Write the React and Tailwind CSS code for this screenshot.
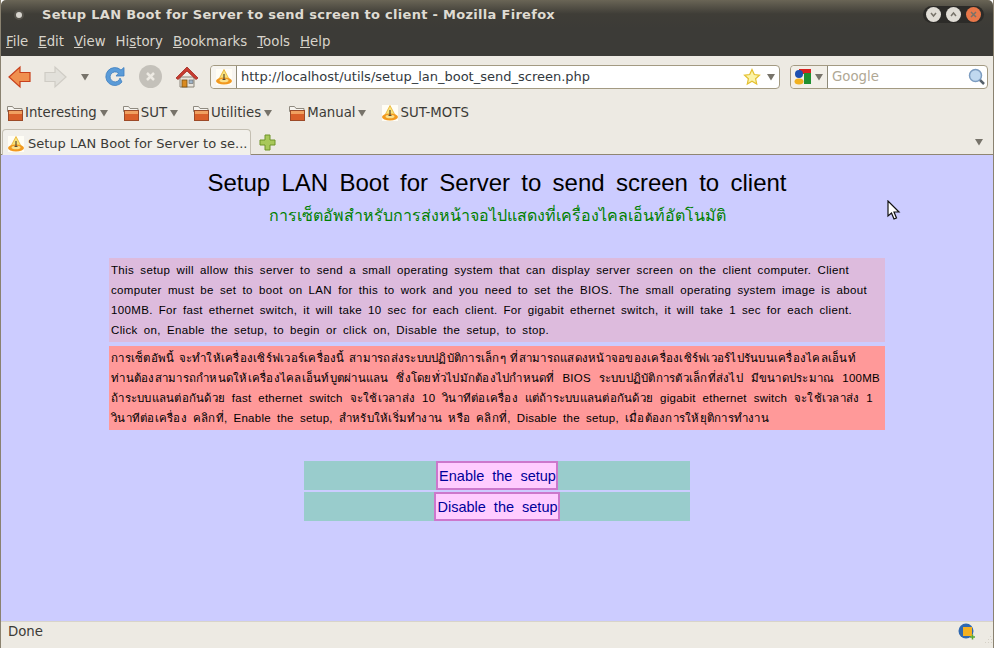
import React from "react";

const uiFont = "font-['DejaVu_Sans',sans-serif]";
const pageFont = "font-['Liberation_Sans','Noto_Sans',sans-serif]";

const Arrow = ({ className = "" }) => (
    <svg width="10" height="8" viewBox="0 0 10 8" className={className}>
        <path d="M1 1h8L5 7.500z" fill="#77736a" />
    </svg>
);

const SiteIcon = ({ size = 16 }) => (
    <svg width={size} height={size} viewBox="0 0 16 16" className="shrink-0">
        <rect width="16" height="16" fill="#fffdf5" />
        <path d="M8 0.500L13.500 11H2.500z" fill="#f8e27a" stroke="#e8b030" strokeWidth="0.800" />
        <ellipse cx="8" cy="12" rx="8" ry="3.500" fill="#f2991f" />
        <ellipse cx="8" cy="11.500" rx="4.500" ry="1.800" fill="#fbe08a" />
        <path d="M8 5v5M6.500 10.500h3" stroke="#5a4a30" strokeWidth="1.200" />
    </svg>
);

const Folder = () => (
    <svg width="16" height="16" viewBox="0 0 16 16" className="shrink-0">
        <path d="M0.500 1.500h5l1.500 2h8v3h-14.500z" fill="#f6f4ef" stroke="#8f8a80" />
        <rect x="1.500" y="5.500" width="14" height="10" fill="#d9602a" stroke="#9c4a28" />
        <rect x="2" y="6" width="13" height="3" fill="#f0a060" />
    </svg>
);

const Menu = ({ pre = "", mark, post }) => (
    <span>{pre}<u>{mark}</u>{post}</span>
);

const BookmarkFolder = ({ label, className = "" }) => (
    <div className={`flex items-center ${className}`}>
        <Folder />
        <span className="ml-[2px]">{label}</span>
        <Arrow className="ml-[2px]" />
    </div>
);

const WinButton = ({ bg, children }) => (
    <div className={`w-[15px] h-[15px] rounded-full flex items-center justify-center ${bg}`}>
        <svg width="9" height="9" viewBox="0 0 9 9" fill="none" stroke="#77736a" strokeWidth="1.500">{children}</svg>
    </div>
);

const englishLines = [
    { text: "This setup will allow this server to send a small operating system that can display server screen on the client computer. Client", width: "w-[738px]" },
    { text: "computer must be set to boot on LAN for this to work and you need to set the BIOS. The small operating system image is about", width: "w-[756px]" },
    { text: "100MB. For fast ethernet switch, it will take 10 sec for each client. For gigabit ethernet switch, it will take 1 sec for each client.", width: "w-[741px]" },
    { text: "Click on, Enable the setup, to begin or click on, Disable the setup, to stop.", width: "w-[438px]" },
];

const thaiLines = [
    { text: "การเซ็ตอัพนี้ จะทำให้เครื่องเซิร์ฟเวอร์เครื่องนี้ สามารถส่งระบบปฏิบัติการเล็กๆ ที่สามารถแสดงหน้าจอของเครื่องเซิร์ฟเวอร์ไปรันบนเครื่องไคลเอ็นท์", width: "w-[745px]" },
    { text: "ท่านต้องสามารถกำหนดให้เครื่องไคลเอ็นท์บูตผ่านแลน ซึ่งโดยทั่วไปมักต้องไปกำหนดที่ BIOS ระบบปฏิบัติการตัวเล็กที่ส่งไป มีขนาดประมาณ 100MB", width: "w-[769px]" },
    { text: "ถ้าระบบแลนต่อกันด้วย fast ethernet switch จะใช้เวลาส่ง 10 วินาทีต่อเครื่อง แต่ถ้าระบบแลนต่อกันด้วย gigabit ethernet switch จะใช้เวลาส่ง 1", width: "w-[762px]" },
    { text: "วินาทีต่อเครื่อง คลิกที่, Enable the setup, สำหรับให้เริ่มทำงาน หรือ คลิกที่, Disable the setup, เมื่อต้องการให้ยุติการทำงาน", width: "w-[658px]" },
];

// each line is stretched to the width it has in the picture
const InfoBox = ({ bg, lines, tracking }) => (
    <div className={`${bg} py-[2px] pl-[2px] text-[11.500px] leading-[20px] ${tracking} text-black`}>
        {lines.map((line) => (
            <div key={line.text} className={`${line.width} whitespace-nowrap text-justify [text-align-last:justify] [text-justify:inter-word]`}>
                {line.text}
            </div>
        ))}
    </div>
);

const ActionRow = ({ label }) => (
    <div className="h-[29px] bg-[#99cccc] flex justify-center">
        <div className="h-full bg-[#ffccff] border-2 border-[#cc77cc] flex items-center pt-[2px] pl-[1px] text-[14.500px] [word-spacing:4px] text-[#000099]">
            {label}
        </div>
    </div>
);

export default function App() {
    return (
        <div className={`w-[994px] h-[648px] flex flex-col overflow-hidden relative border-x border-[#8a8270] ${uiFont}`}>
            {/* Title bar */}
            <div className="h-[28px] shrink-0 flex items-center bg-gradient-to-b from-[#6a6556] via-[#3f3d37] to-[#3c3b37] pl-[13px] pr-[9px] pt-[1px] rounded-t-[5px]">
                <div className="w-[10px] h-[10px] rounded-full bg-[#d8d5cf] border-2 border-[#55524b]" />
                <div className="ml-[18px] text-[13px] font-bold tracking-[0.29px] text-[#dfdbd2]">
                    Setup LAN Boot for Server to send screen to client - Mozilla Firefox
                </div>
                <div className="ml-auto flex items-center gap-[5px] rounded-full bg-[#2c2b28] px-[3px] py-[1px]">
                    <WinButton bg="bg-[#e0ddd6]"><path d="M2 3l2.500 3 2.500-3" /></WinButton>
                    <WinButton bg="bg-[#e0ddd6]"><path d="M2 6l2.500-3 2.500 3" /></WinButton>
                    <WinButton bg="bg-[#e8784a]"><path d="M2 2l5 5M7 2l-5 5" /></WinButton>
                </div>
            </div>

            {/* Menu bar */}
            <div className="h-[28px] shrink-0 bg-[#3c3b37] flex items-center gap-[10px] pl-[5px] pb-[1px] text-[13.300px] text-[#d8d4cb]">
                <Menu mark="F" post="ile" />
                <Menu mark="E" post="dit" />
                <Menu mark="V" post="iew" />
                <Menu pre="Hi" mark="s" post="tory" />
                <Menu mark="B" post="ookmarks" />
                <Menu mark="T" post="ools" />
                <Menu mark="H" post="elp" />
            </div>

            {/* Navigation toolbar */}
            <div className="h-[39px] shrink-0 bg-[#edeae3] flex items-center pl-[7px] pr-[5px] pt-[2px]">
                <svg width="23" height="24" viewBox="0 0 23 24" className="shrink-0">
                    <path d="M1 12L12 2v5.500h10v9H12V22z" fill="#f09050" stroke="#c8401c" strokeWidth="1.200" />
                </svg>
                <svg width="23" height="24" viewBox="0 0 23 24" className="shrink-0 ml-[13px]">
                    <path d="M22 12L11 2v5.500H1v9h10V22z" fill="#e2e0da" stroke="#cfccc5" strokeWidth="1.200" />
                </svg>
                <Arrow className="ml-[13px]" />
                <svg width="24" height="24" viewBox="0 0 24 24" className="shrink-0 ml-[13px]">
                    <path d="M19 17a9 9 0 1 1-1-12l3-2.500V11h-8l2.500-2.800A5 5 0 1 0 17 13z" fill="#5a9bd8" stroke="#3f7fbf" strokeWidth="0.800" />
                </svg>
                <div className="ml-[12px] w-[23px] h-[23px] rounded-full bg-[#c4c1ba] flex items-center justify-center shrink-0">
                    <svg width="11" height="11" viewBox="0 0 11 11"><path d="M2 2l7 7M9 2l-7 7" stroke="#edeae3" strokeWidth="2.500" /></svg>
                </div>
                <svg width="24" height="24" viewBox="0 0 24 24" className="shrink-0 ml-[13px]">
                    <path d="M5 12h14v10H5z" fill="#e8e4dc" stroke="#8a8578" />
                    <path d="M1 13L12 2l11 11-2 1.500L12 6l-9 8.500z" fill="#c83c30" stroke="#a02820" strokeWidth="0.800" />
                    <rect x="7" y="15" width="5" height="7" fill="#d98a20" stroke="#7a5010" strokeWidth="0.800" />
                    <rect x="14" y="15" width="4" height="3.500" fill="#9fb4c8" stroke="#666" strokeWidth="0.600" />
                </svg>
                <div className="ml-[11px] w-[570px] h-[24px] bg-white border border-[#a39a82] rounded-[4px] flex items-center shrink-0">
                    <div className="h-full flex items-center pl-[5px] pr-[4px] bg-[#f7f5f0] border-r border-[#8f8a78] rounded-l-[4px]">
                        <SiteIcon />
                    </div>
                    <span className="ml-[4px] text-[13px] text-[#33393e]">http://localhost/utils/setup_lan_boot_send_screen.php</span>
                    <svg width="18" height="18" viewBox="0 0 18 18" className="ml-auto">
                        <path d="M9 1.500l2.300 5 5.200.6-3.900 3.600 1.100 5.300L9 13.300 4.300 16l1.100-5.300L1.500 7.100l5.200-.6z" fill="#fbf3a8" stroke="#e4c030" strokeWidth="1.200" />
                    </svg>
                    <Arrow className="mx-[3px] ml-[5px]" />
                </div>
                <div className="ml-[10px] flex-1 h-[24px] bg-white border border-[#a39a82] rounded-[4px] flex items-center">
                    <div className="h-full flex items-center pl-[3px] pr-[3px] gap-[3px] bg-[#f2efe8] border-r border-[#8f8a78] rounded-l-[4px]">
                        <svg width="17" height="17" viewBox="0 0 17 17">
                            <rect x="5" y="1" width="12" height="5" fill="#d8211f" />
                            <rect x="10" y="5" width="7" height="11" fill="#1f9030" />
                            <circle cx="5" cy="6" r="4" fill="#1c50b0" />
                            <ellipse cx="5" cy="13.500" rx="4.500" ry="3" fill="#f0b020" />
                        </svg>
                        <Arrow />
                    </div>
                    <span className="ml-[4px] text-[13.300px] text-[#b0a895]">Google</span>
                    <svg width="18" height="18" viewBox="0 0 18 18" className="ml-auto mr-[1px]">
                        <path d="M11 11l5 5" stroke="#55606a" strokeWidth="2.500" />
                        <circle cx="7.500" cy="7.500" r="6" fill="#c0d8ef" stroke="#7c9cc0" strokeWidth="1.500" />
                    </svg>
                </div>
            </div>

            {/* Bookmarks toolbar */}
            <div className="h-[34px] shrink-0 bg-[#edeae3] flex items-center pl-[6px] pt-[2px] text-[13.300px] text-[#3c3b37]">
                <BookmarkFolder label="Interesting" />
                <BookmarkFolder label="SUT" className="ml-[14px]" />
                <BookmarkFolder label="Utilities" className="ml-[14px]" />
                <BookmarkFolder label="Manual" className="ml-[16px]" />
                <div className="ml-[15px] flex items-center gap-[2px]">
                    <SiteIcon />
                    <span>SUT-MOTS</span>
                </div>
            </div>

            {/* Tab strip */}
            <div className="h-[26px] shrink-0 bg-[#edeae3] border-b border-[#8f8672] flex items-end pl-[1px] pr-[9px]">
                <div className="w-[249px] h-[26px] -mb-[1px] pt-[2px] bg-[#f2f0eb] border border-b-0 border-[#c4bfb2] rounded-t-[4px] flex items-center pl-[5px] text-[13px] text-[#3c3b37] whitespace-nowrap">
                    <SiteIcon />
                    <span className="ml-[4px]">Setup LAN Boot for Server to se...</span>
                </div>
                <svg width="17" height="17" viewBox="0 0 17 17" className="ml-[8px] mb-[3px]">
                    <path d="M6 1h5v5h5v5h-5v5H6v-5H1V6h5z" fill="#a8c85a" stroke="#6e9428" />
                </svg>
                <Arrow className="ml-auto mb-[8px]" />
            </div>

            {/* Page content */}
            <main className={`flex-1 bg-[#ccccff] ${pageFont}`}>
                <h1 className="mt-[14px] text-center text-[24px] leading-[28px] [word-spacing:4.600px] text-black">
                    Setup LAN Boot for Server to send screen to client
                </h1>
                <p className="mt-[7px] text-center text-[16px] leading-[24px] text-[#008000]">
                    การเซ็ตอัพสำหรับการส่งหน้าจอไปแสดงที่เครื่องไคลเอ็นท์อัตโนมัติ
                </p>
                <div className="mt-[30px] ml-[108px] w-[776px] flex flex-col gap-[4px]">
                    <InfoBox bg="bg-[#ddbbdd]" lines={englishLines} tracking="tracking-[0.35px]" />
                    <InfoBox bg="bg-[#ff9999]" lines={thaiLines} tracking="tracking-[0.25px]" />
                </div>
                <div className="mt-[31px] ml-[303px] w-[386px] flex flex-col gap-[2px]">
                    <ActionRow label="Enable the setup" />
                    <ActionRow label="Disable the setup" />
                </div>
            </main>

            {/* Status bar */}
            <div className="h-[27px] shrink-0 bg-[#edeae3] border-t border-[#d8d4ca] flex items-center pl-[7px] pr-[17px] pb-[6px] text-[13.300px] text-[#3c3b37] relative">
                <span>Done</span>
                <svg width="18" height="18" viewBox="0 0 18 18" className="ml-auto">
                    <circle cx="8" cy="8" r="7.500" fill="#2f68b0" />
                    <rect x="5" y="4" width="9" height="9" fill="#f4b020" />
                    <path d="M12 14h5M14.500 11.500v5" stroke="#5aa830" strokeWidth="1.500" />
                </svg>
                <svg width="10" height="12" viewBox="0 0 10 12" className="absolute right-0 bottom-[1px]" fill="#d5d1c7">
                    <rect x="7" y="1" width="1" height="1" />
                    <rect x="5" y="4" width="1" height="1" />
                    <rect x="8" y="4" width="1" height="1" />
                    <rect x="2" y="7" width="1" height="1" />
                    <rect x="5" y="7" width="1" height="1" />
                    <rect x="8" y="7" width="1" height="1" />
                </svg>
            </div>

            {/* Mouse cursor captured in the screenshot */}
            <svg width="14" height="21" viewBox="0 0 14 21" className="absolute left-[886px] top-[200px]">
                <path d="M1 1v15l3.500-3 2.500 6 2.500-1-2.500-6h5z" fill="#fff" stroke="#111" strokeWidth="1.200" />
            </svg>
        </div>
    );
}
